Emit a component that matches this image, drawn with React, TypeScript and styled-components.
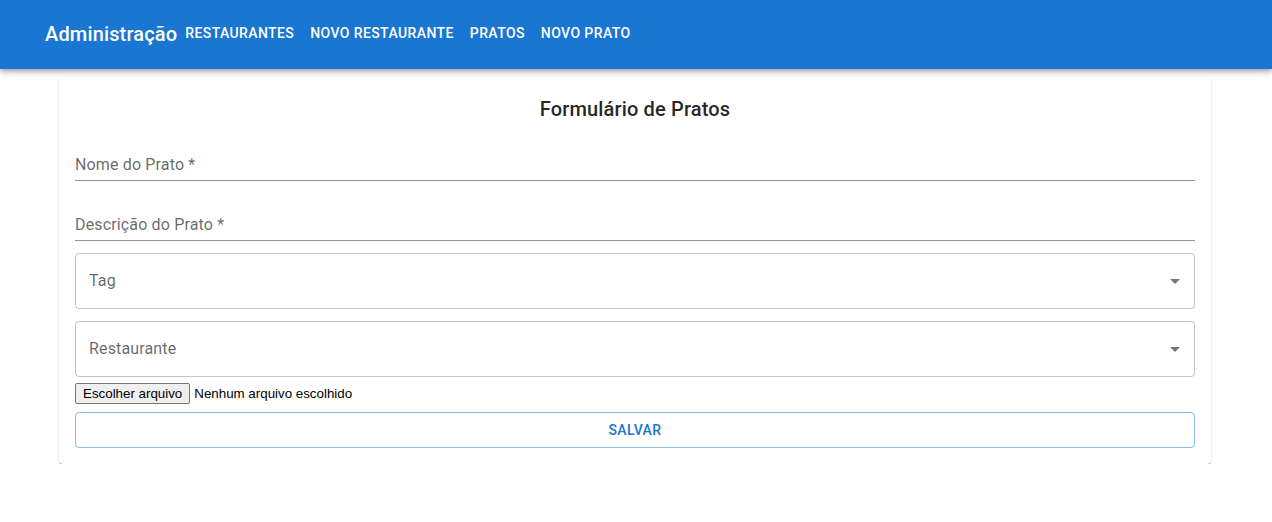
import React from "react";
import styled, { createGlobalStyle } from "styled-components";

const Global = createGlobalStyle`
  * { box-sizing: border-box; }
  body { margin: 0; font-family: Roboto, "Helvetica", Arial, sans-serif; background: #fff; }
`;

const AppBar = styled.header`
  height: 69px;
  background: #1976d2;
  color: #fff;
  display: flex;
  align-items: center;
  padding: 0 45px;
  box-shadow: 0px 2px 4px -1px rgba(0,0,0,0.2), 0px 4px 5px 0px rgba(0,0,0,0.14), 0px 1px 10px 0px rgba(0,0,0,0.12);
  position: relative;
  z-index: 1;
`;

const Brand = styled.h6`
  margin: 0 0 2px;
  font-size: 20px;
  font-weight: 500;
  line-height: 1.6;
  letter-spacing: 0.0075em;
`;

const Nav = styled.nav`
  display: flex;
  margin-bottom: 2px;
`;

const NavButton = styled.a`
  padding: 6px 8px;
  font-size: 14px;
  font-weight: 500;
  line-height: 1.75;
  letter-spacing: 0.02857em;
  text-transform: uppercase;
  color: #fff;
`;

const Container = styled.main`
  padding: 8px 61px 0 59px;
`;

const Paper = styled.section`
  background: #fff;
  border-radius: 4px;
  box-shadow: 0px 2px 1px -1px rgba(0,0,0,0.25), 0px 1px 1px 0px rgba(0,0,0,0.16), 0px 1px 3px 0px rgba(0,0,0,0.12);
  padding: 16px;
  display: flex;
  flex-direction: column;
`;

const Title = styled.h6`
  margin: 0;
  text-align: center;
  font-size: 20px;
  font-weight: 500;
  line-height: 1.6;
  letter-spacing: 0.0075em;
  color: rgba(0,0,0,0.87);
`;

const StandardField = styled.div`
  margin: 8px 0 4px;
  padding-top: 16px;
  border-bottom: 1px solid rgba(0,0,0,0.42);
`;

const StandardLabel = styled.div`
  padding: 4px 0 4px;
  height: 31px;
  font-size: 16px;
  line-height: 23px;
  letter-spacing: 0.00938em;
  color: rgba(0,0,0,0.6);
`;

const OutlinedSelect = styled.div`
  margin: 8px 0 4px;
  height: 56px;
  border: 1px solid rgba(0,0,0,0.23);
  border-radius: 4px;
  display: flex;
  align-items: center;
  justify-content: space-between;
  padding: 0 7px 0 13px;
`;

const SelectLabel = styled.span`
  margin-bottom: 2px;
  font-size: 16px;
  line-height: 23px;
  letter-spacing: 0.00938em;
  color: rgba(0,0,0,0.6);
`;

const Arrow = styled.svg`
  width: 24px;
  height: 24px;
  fill: rgba(0,0,0,0.54);
`;

const FileRow = styled.div`
  display: flex;
  align-items: center;
  margin-top: 2px;
  font-family: "Liberation Sans", Arial, sans-serif;
  font-size: 13.333px;
  color: #000;
`;

const FileButton = styled.span`
  display: inline-block;
  height: 21px;
  line-height: 17px;
  padding: 1px 7px;
  background: #efefef;
  border: 1px solid #767676;
  border-radius: 2px;
  margin-right: 4px;
`;

const SaveButton = styled.button`
  margin-top: 8px;
  width: 100%;
  height: 36px;
  background: transparent;
  border: 1px solid rgba(25,118,210,0.5);
  border-radius: 4px;
  color: #1976d2;
  font-family: Roboto, sans-serif;
  font-size: 14px;
  font-weight: 500;
  letter-spacing: 0.02857em;
  text-transform: uppercase;
  padding: 5px 15px;
`;

const DropIcon = () => (
  <Arrow viewBox="0 0 24 24"><path d="M7 10l5 5 5-5z" /></Arrow>
);

export default function App() {
  return (
    <>
      <Global />
      <AppBar>
        <Brand>Administração</Brand>
        <Nav>
          <NavButton>Restaurantes</NavButton>
          <NavButton>Novo Restaurante</NavButton>
          <NavButton>Pratos</NavButton>
          <NavButton>Novo Prato</NavButton>
        </Nav>
      </AppBar>
      <Container>
        <Paper>
          <Title>Formulário de Pratos</Title>
          <StandardField><StandardLabel>Nome do Prato *</StandardLabel></StandardField>
          <StandardField><StandardLabel>Descrição do Prato *</StandardLabel></StandardField>
          <OutlinedSelect><SelectLabel>Tag</SelectLabel><DropIcon /></OutlinedSelect>
          <OutlinedSelect><SelectLabel>Restaurante</SelectLabel><DropIcon /></OutlinedSelect>
          <FileRow>
            <FileButton>Escolher arquivo</FileButton>
            Nenhum arquivo escolhido
          </FileRow>
          <SaveButton>Salvar</SaveButton>
        </Paper>
      </Container>
    </>
  );
}
